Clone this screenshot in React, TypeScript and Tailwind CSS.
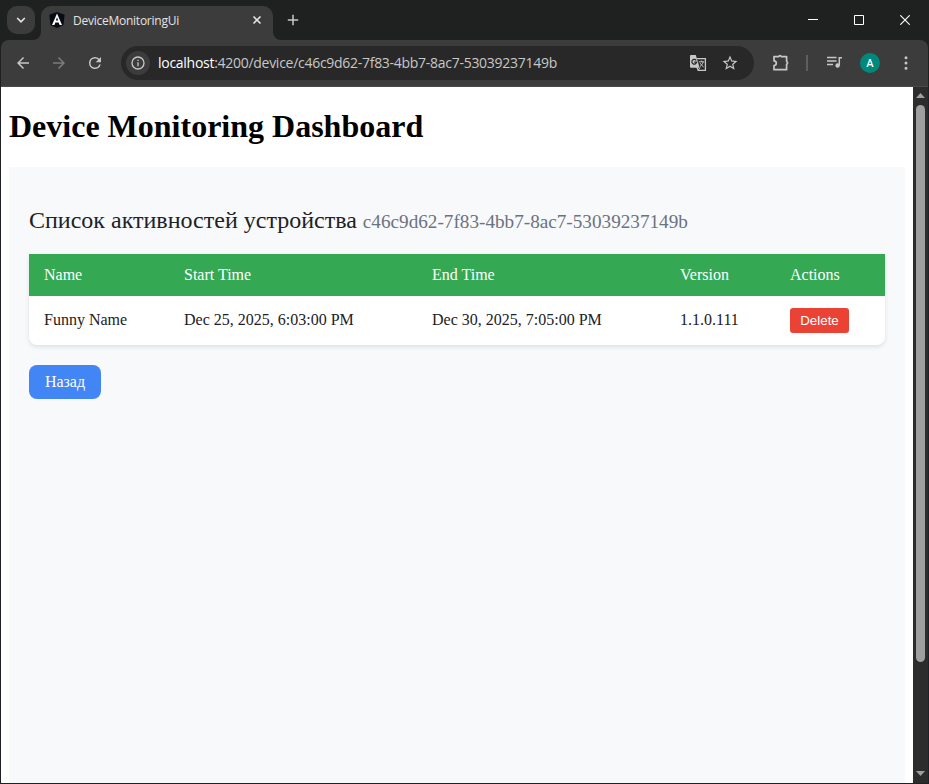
import type { ReactNode } from "react";

const ID = "c46c9d62-7f83-4bb7-8ac7-53039237149b";

function Glyph({ d, className = "" }: { d: string; className?: string }) {
  return (
    <svg viewBox="0 0 24 24" fill="currentColor" className={`shrink-0 ${className}`}>
      <path d={d} />
    </svg>
  );
}

function AngularLogo() {
  return (
    <svg viewBox="0 0 16 16" className="size-4 shrink-0">
      <path d="M8 0 15.6 2.7 14.5 13 8 16 1.5 13 .4 2.7Z" fill="#080b16" />
      <path d="M8 1.600 3 12.900h2.400l1-2.500h3.200l1 2.500H13ZM8 5.200l1.100 3.300H6.900Z" fill="#fff" fillRule="evenodd" />
    </svg>
  );
}

function TabStrip() {
  return (
    <div className="flex h-10 bg-[#1f2121] text-[#e3e3e3]">
      <button className="ml-[7px] mt-1.5 flex size-7 items-center justify-center rounded-[10px] bg-[#3c3c3c]">
        <svg viewBox="0 0 10 10" className="size-2.5" fill="none" stroke="currentColor" strokeWidth="1.7">
          <path d="m1.2 3 3.8 3.8L8.8 3" />
        </svg>
      </button>
      <svg viewBox="0 0 8 8" className="-ml-[2px] size-2 self-end" fill="#3c3c3c">
        <path d="M8 0v8H0a8 8 0 0 0 8-8Z" />
      </svg>
      <div className="mt-1.5 flex w-[232px] items-center rounded-t-[10px] bg-[#3c3c3c] pb-[6px] pl-2 pr-[11px]">
        <AngularLogo />
        <span className="ml-2 w-[120px] whitespace-nowrap pt-0.5 font-['Open_Sans',sans-serif] text-[12px] leading-4 tracking-[-0.25px]">DeviceMonitoringUi</span>
        <svg viewBox="0 0 10 10" className="ml-auto size-2.5" fill="none" stroke="currentColor" strokeWidth="1.6">
          <path d="m1.5 1.500 7 7m0-7-7 7" />
        </svg>
      </div>
      <svg viewBox="0 0 8 8" className="size-2 self-end" fill="#3c3c3c">
        <path d="M0 0v8h8a8 8 0 0 1-8-8Z" />
      </svg>
      <svg viewBox="0 0 12 12" className="ml-1.5 mt-3.5 size-3" fill="none" stroke="#c7c7c7" strokeWidth="1.5">
        <path d="M6 .8v10.4M.8 6h10.4" />
      </svg>
      <div className="ml-auto mr-[19px] flex items-center gap-9 text-white">
        <svg viewBox="0 0 10 10" className="size-2.5" stroke="currentColor"><path d="M0 4.5h10" /></svg>
        <svg viewBox="0 0 10 10" className="size-2.5" fill="none" stroke="currentColor"><path d="M.5.5h9v9h-9Z" /></svg>
        <svg viewBox="0 0 10 10" className="size-2.5" fill="none" stroke="currentColor" strokeWidth="1.1"><path d="m.3.3 9.4 9.4m0-9.4L.3 9.7" /></svg>
      </div>
    </div>
  );
}

function TranslateIcon() {
  return (
    <svg viewBox="0 0 18 18" className="size-[18px] shrink-0">
      <path d="M8 4.600h8.400v11.800H9.300L7.800 13" fill="none" stroke="#c7c7c7" strokeWidth="1.3" />
      <path d="M2 1h4.800l3.800 12.700H2a1 1 0 0 1-1-1V2a1 1 0 0 1 1-1Z" fill="#c7c7c7" />
      <path d="M7.200 6.300A2.400 2.400 0 1 0 7.600 8.200H5.200" fill="none" stroke="#282828" strokeWidth="1.200" />
      <path d="M9.800 7.800h5.400M12.500 6.600v1.200M14.200 7.800c-.5 2-1.700 3.500-3.200 4.700M11.200 9.200c.8 1.500 2 2.800 3.400 3.800M9.200 16.200l1.800-2.700" fill="none" stroke="#c7c7c7" />
    </svg>
  );
}

function Toolbar() {
  return (
    <div className="bg-[#1f2121]">
      <div className="mx-px flex h-[47px] items-center rounded-t-lg border-b border-[#4a4a4a] bg-[#3c3c3c] pl-[13px] text-[#c7c7c7]">
        <Glyph className="size-[18px]" d="M20 11H7.830l5.590-5.590L12 4l-8 8 8 8 1.410-1.410L7.830 13H20v-2z" />
        <Glyph className="ml-[18px] size-[18px] text-[#7b7b7b]" d="m12 4-1.410 1.410L16.170 11H4v2h12.170l-5.580 5.590L12 20l8-8z" />
        <Glyph className="ml-[18px] size-[18px]" d="M17.650 6.350A7.960 7.960 0 0 0 12 4a8 8 0 1 0 7.730 10h-2.080A6 6 0 1 1 12 6c1.660 0 3.140.690 4.220 1.780L13 11h7V4l-2.350 2.350z" />
        <div className="ml-[17px] flex h-[34px] w-[633px] shrink-0 items-center rounded-full bg-[#282828] pl-[5px] pr-[15px]">
          <span className="flex size-6 items-center justify-center rounded-full bg-[#3c3c3c]">
            <Glyph className="size-4" d="M11 7h2v2h-2zm0 4h2v6h-2zm1-9a10 10 0 1 0 0 20 10 10 0 0 0 0-20zm0 18a8 8 0 1 1 0-16 8 8 0 0 1 0 16z" />
          </span>
          <span className="ml-2 whitespace-nowrap font-['Open_Sans',sans-serif] text-[14px] leading-5 tracking-[-0.28px] text-[#c7c7c7]">
            <span className="text-white">localhost</span>:4200/device/{ID}
          </span>
          <span className="ml-auto flex items-center gap-[14px]">
            <TranslateIcon />
            <Glyph className="size-[18px]" d="m22 9.240-7.190-.620L12 2 9.190 8.630 2 9.240l5.460 4.730L5.820 21 12 17.270 18.180 21l-1.630-7.030L22 9.240zM12 15.400l-3.760 2.270 1-4.280-3.320-2.880 4.380-.380L12 6.100l1.710 4.040 4.380.380-3.320 2.880 1 4.280L12 15.400z" />
          </span>
        </div>
        <svg viewBox="0 0 18 18" className="ml-[18px] size-[18px] shrink-0" fill="none" stroke="currentColor" strokeWidth="1.7" strokeLinejoin="round">
          <path d="M2 2.600h4.600a1.500 1.500 0 0 1 2.800 0h5.200v4.900a1.500 1.500 0 0 1 0 2.800v5.400H2v-4.200c1.500-.1 2.300-1 2.300-2.300S3.500 7 2 6.900Z" />
        </svg>
        <span className="ml-4 h-4 w-0.5 bg-[#5e5e5e]" />
        <svg viewBox="0 0 18 18" className="ml-[17px] size-[18px] shrink-0" fill="none" stroke="currentColor" strokeWidth="1.5">
          <path d="M2 3.500h9.500M2 7h9.500M2 10.500h6M17 3.700h-2.700v7.500" />
          <circle cx="12.600" cy="11.500" r="2.200" fill="currentColor" stroke="none" />
        </svg>
        <span className="ml-[17px] flex size-5 shrink-0 items-center justify-center rounded-full bg-[#00897b] pt-0.5 font-[Roboto,sans-serif] text-[11px] font-medium text-white">A</span>
        <Glyph className="ml-[17px] size-[18px]" d="M12 7a2 2 0 1 0 0-4 2 2 0 0 0 0 4zm0 7a2 2 0 1 0 0-4 2 2 0 0 0 0 4zm0 7a2 2 0 1 0 0-4 2 2 0 0 0 0 4z" />
      </div>
    </div>
  );
}

function Th({ children }: { children?: ReactNode }) {
  return <th className="h-[42px] px-[15px] text-left font-normal text-white">{children}</th>;
}

function Td({ children }: { children?: ReactNode }) {
  return <td className="h-[49px] px-[15px] pb-0.5">{children}</td>;
}

function Page() {
  return (
    <main className="min-w-0 flex-1 overflow-hidden bg-white px-2 pt-[21px] font-['Liberation_Serif',serif] text-[#202124]">
      <h1 className="text-[32px] font-bold leading-9 text-black">Device Monitoring Dashboard</h1>
      <section className="mt-[23px] h-[700px] bg-[#f8f9fb] px-5 pt-[39px]">
        <h2 className="whitespace-nowrap text-2xl leading-7">
          Список активностей устройства <span className="text-[19.200px] text-[#6b7280]">{ID}</span>
        </h2>
        <div className="mt-[18px] overflow-hidden rounded-b-lg bg-white shadow-[0_2px_4px_rgba(0,0,0,0.1)]">
          <table className="w-full table-fixed border-collapse text-base">
            <colgroup>
              <col className="w-[140px]" />
              <col className="w-[248px]" />
              <col className="w-[248px]" />
              <col className="w-[110px]" />
              <col className="w-[110px]" />
            </colgroup>
            <thead className="bg-[#34a853]">
              <tr><Th>Name</Th><Th>Start Time</Th><Th>End Time</Th><Th>Version</Th><Th>Actions</Th></tr>
            </thead>
            <tbody>
              <tr>
                <Td>Funny Name</Td>
                <Td>Dec 25, 2025, 6:03:00 PM</Td>
                <Td>Dec 30, 2025, 7:05:00 PM</Td>
                <Td>1.1.0.111</Td>
                <Td>
                  <button className="mt-0.5 block h-[25px] w-[59px] rounded-[3px] bg-[#ea4335] font-['Liberation_Sans',sans-serif] text-[13.333px] leading-[15px] text-white">Delete</button>
                </Td>
              </tr>
            </tbody>
          </table>
        </div>
        <button className="mt-5 h-[34px] w-[72px] rounded-lg bg-[#4285f4] text-base leading-[18px] text-white">Назад</button>
      </section>
    </main>
  );
}

function Scrollbar() {
  return (
    <div className="flex w-[15px] flex-col items-center bg-[#2c2c2c] pb-[7px] pt-[6px]">
      <svg viewBox="0 0 9 5" className="h-[5px] w-[9px]" fill="#9f9f9f"><path d="M4.500 0 9 5H0Z" /></svg>
      <span className="mt-[7px] h-[557px] w-[9px] rounded-full bg-[#9f9f9f]" />
      <svg viewBox="0 0 9 5" className="mt-auto h-[5px] w-[9px]" fill="#9f9f9f"><path d="M0 0h9L4.500 5Z" /></svg>
    </div>
  );
}

export default function App() {
  return (
    <div className="flex h-[784px] w-[929px] flex-col overflow-hidden bg-[#1f2121]">
      <TabStrip />
      <Toolbar />
      <div className="flex min-h-0 flex-1 border-x border-b border-[#202124]">
        <Page />
        <Scrollbar />
      </div>
    </div>
  );
}
